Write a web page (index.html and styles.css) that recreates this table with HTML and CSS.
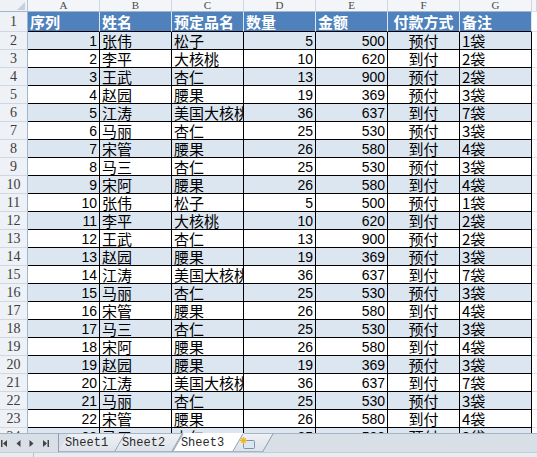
FILE: index.html
```html
<!DOCTYPE html>
<html lang="zh">
<head>
<meta charset="utf-8">
<title>Sheet3</title>
<link rel="stylesheet" href="styles.css">
</head>
<body>
<div class="sheet">
  <div class="row colhead">
    <div class="corner"><span class="tri"></span></div>
    <div class="ch">A</div><div class="ch">B</div><div class="ch">C</div><div class="ch">D</div><div class="ch">E</div><div class="ch">F</div><div class="ch">G</div><div class="ch x"></div>
  </div>
  <div class="row hdr">
    <div class="rh">1</div>
    <div class="c">序列</div><div class="c">姓名</div><div class="c">预定品名</div><div class="c">数量</div><div class="c">金额</div><div class="c m">付款方式</div><div class="c">备注</div><div class="x"></div>
  </div>
  <div class="row band"><div class="rh">2</div><div class="c r n">1</div><div class="c">张伟</div><div class="c">松子</div><div class="c r n">5</div><div class="c r n">500</div><div class="c m">预付</div><div class="c">1袋</div><div class="x"></div></div>
  <div class="row"><div class="rh">3</div><div class="c r n">2</div><div class="c">李平</div><div class="c">大核桃</div><div class="c r n">10</div><div class="c r n">620</div><div class="c m">到付</div><div class="c">2袋</div><div class="x"></div></div>
  <div class="row band"><div class="rh">4</div><div class="c r n">3</div><div class="c">王武</div><div class="c">杏仁</div><div class="c r n">13</div><div class="c r n">900</div><div class="c m">预付</div><div class="c">2袋</div><div class="x"></div></div>
  <div class="row"><div class="rh">5</div><div class="c r n">4</div><div class="c">赵园</div><div class="c">腰果</div><div class="c r n">19</div><div class="c r n">369</div><div class="c m">预付</div><div class="c">3袋</div><div class="x"></div></div>
  <div class="row band"><div class="rh">6</div><div class="c r n">5</div><div class="c">江涛</div><div class="c clip">美国大核桃</div><div class="c r n">36</div><div class="c r n">637</div><div class="c m">到付</div><div class="c">7袋</div><div class="x"></div></div>
  <div class="row"><div class="rh">7</div><div class="c r n">6</div><div class="c">马丽</div><div class="c">杏仁</div><div class="c r n">25</div><div class="c r n">530</div><div class="c m">预付</div><div class="c">3袋</div><div class="x"></div></div>
  <div class="row band"><div class="rh">8</div><div class="c r n">7</div><div class="c">宋管</div><div class="c">腰果</div><div class="c r n">26</div><div class="c r n">580</div><div class="c m">到付</div><div class="c">4袋</div><div class="x"></div></div>
  <div class="row"><div class="rh">9</div><div class="c r n">8</div><div class="c">马三</div><div class="c">杏仁</div><div class="c r n">25</div><div class="c r n">530</div><div class="c m">预付</div><div class="c">3袋</div><div class="x"></div></div>
  <div class="row band"><div class="rh">10</div><div class="c r n">9</div><div class="c">宋阿</div><div class="c">腰果</div><div class="c r n">26</div><div class="c r n">580</div><div class="c m">到付</div><div class="c">4袋</div><div class="x"></div></div>
  <div class="row"><div class="rh">11</div><div class="c r n">10</div><div class="c">张伟</div><div class="c">松子</div><div class="c r n">5</div><div class="c r n">500</div><div class="c m">预付</div><div class="c">1袋</div><div class="x"></div></div>
  <div class="row band"><div class="rh">12</div><div class="c r n">11</div><div class="c">李平</div><div class="c">大核桃</div><div class="c r n">10</div><div class="c r n">620</div><div class="c m">到付</div><div class="c">2袋</div><div class="x"></div></div>
  <div class="row"><div class="rh">13</div><div class="c r n">12</div><div class="c">王武</div><div class="c">杏仁</div><div class="c r n">13</div><div class="c r n">900</div><div class="c m">预付</div><div class="c">2袋</div><div class="x"></div></div>
  <div class="row band"><div class="rh">14</div><div class="c r n">13</div><div class="c">赵园</div><div class="c">腰果</div><div class="c r n">19</div><div class="c r n">369</div><div class="c m">预付</div><div class="c">3袋</div><div class="x"></div></div>
  <div class="row"><div class="rh">15</div><div class="c r n">14</div><div class="c">江涛</div><div class="c clip">美国大核桃</div><div class="c r n">36</div><div class="c r n">637</div><div class="c m">到付</div><div class="c">7袋</div><div class="x"></div></div>
  <div class="row band"><div class="rh">16</div><div class="c r n">15</div><div class="c">马丽</div><div class="c">杏仁</div><div class="c r n">25</div><div class="c r n">530</div><div class="c m">预付</div><div class="c">3袋</div><div class="x"></div></div>
  <div class="row"><div class="rh">17</div><div class="c r n">16</div><div class="c">宋管</div><div class="c">腰果</div><div class="c r n">26</div><div class="c r n">580</div><div class="c m">到付</div><div class="c">4袋</div><div class="x"></div></div>
  <div class="row band"><div class="rh">18</div><div class="c r n">17</div><div class="c">马三</div><div class="c">杏仁</div><div class="c r n">25</div><div class="c r n">530</div><div class="c m">预付</div><div class="c">3袋</div><div class="x"></div></div>
  <div class="row"><div class="rh">19</div><div class="c r n">18</div><div class="c">宋阿</div><div class="c">腰果</div><div class="c r n">26</div><div class="c r n">580</div><div class="c m">到付</div><div class="c">4袋</div><div class="x"></div></div>
  <div class="row band"><div class="rh">20</div><div class="c r n">19</div><div class="c">赵园</div><div class="c">腰果</div><div class="c r n">19</div><div class="c r n">369</div><div class="c m">预付</div><div class="c">3袋</div><div class="x"></div></div>
  <div class="row"><div class="rh">21</div><div class="c r n">20</div><div class="c">江涛</div><div class="c clip">美国大核桃</div><div class="c r n">36</div><div class="c r n">637</div><div class="c m">到付</div><div class="c">7袋</div><div class="x"></div></div>
  <div class="row band"><div class="rh">22</div><div class="c r n">21</div><div class="c">马丽</div><div class="c">杏仁</div><div class="c r n">25</div><div class="c r n">530</div><div class="c m">预付</div><div class="c">3袋</div><div class="x"></div></div>
  <div class="row"><div class="rh">23</div><div class="c r n">22</div><div class="c">宋管</div><div class="c">腰果</div><div class="c r n">26</div><div class="c r n">580</div><div class="c m">到付</div><div class="c">4袋</div><div class="x"></div></div>
  <div class="row band partial"><div class="rh">24</div><div class="c r n">23</div><div class="c">马三</div><div class="c">杏仁</div><div class="c r n">25</div><div class="c r n">530</div><div class="c m">预付</div><div class="c">3袋</div><div class="x"></div></div>
</div>
<div class="tabbar">
  <div class="nav">
    <svg width="7" height="7" viewBox="0 0 7 7"><rect x="0" y="0" width="1.5" height="7" fill="#444"/><polygon points="6,0 6,7 2,3.5" fill="#444"/></svg>
    <svg width="5" height="7" viewBox="0 0 5 7"><polygon points="4.5,0 4.5,7 0.5,3.5" fill="#444"/></svg>
    <svg width="5" height="7" viewBox="0 0 5 7"><polygon points="0.5,0 0.5,7 4.5,3.5" fill="#444"/></svg>
    <svg width="7" height="7" viewBox="0 0 7 7"><polygon points="1,0 1,7 5,3.5" fill="#444"/><rect x="5.5" y="0" width="1.5" height="7" fill="#444"/></svg>
  </div>
  <div class="tabs">
    <div class="tab first"><span class="lbl">Sheet1</span></div>
    <div class="tab"><span class="lbl">Sheet2</span></div>
    <div class="tab active"><span class="lbl">Sheet3</span></div>
    <div class="tab newtab">
      <svg width="18" height="12" viewBox="0 0 18 12"><rect x="4.5" y="3.5" width="11" height="8" rx="1" fill="#dbe6f3" stroke="#7d93ad"/><circle cx="4.5" cy="3.5" r="3" fill="#f6d25a"/><path d="M4.5 0v7M1 3.5h7M2 1l5 5M7 1l-5 5" stroke="#e8b020" stroke-width="0.8"/></svg>
    </div>
  </div>
</div>
<div class="status"><span class="grip"></span></div>
</body>
</html>
```

FILE: styles.css
```css
html, body {
  margin: 0;
  padding: 0;
  width: 537px;
  height: 457px;
  overflow: hidden;
  background: #fff;
}

.sheet {
  height: 433px;
  overflow: hidden;
  font-family: "Noto Sans CJK SC", sans-serif;
  font-size: 15px;
  color: #000;
}

.row {
  display: flex;
  height: 18px;
}

.row > div {
  box-sizing: border-box;
  flex: none;
}

.colhead {
  height: 12px;
}

.corner {
  width: 28px;
  background: #eef1f6;
  border-right: 1px solid #b8c4d3;
  border-bottom: 1px solid #9eb6ce;
  position: relative;
}

.corner .tri {
  position: absolute;
  right: 2px;
  bottom: 1px;
  width: 0;
  height: 0;
  border-left: 8px solid transparent;
  border-bottom: 8px solid #c8cfd9;
}

.ch {
  width: 72px;
  background: #f3f5f9;
  border-right: 1px solid #d0d7e2;
  border-bottom: 1px solid #9eb6ce;
  font-family: "Liberation Serif", serif;
  font-size: 11px;
  line-height: 11px;
  color: #4a4a4a;
  text-align: center;
}

.row > .ch.x,
.row > .x {
  flex: 1;
  width: auto;
}

.rh {
  width: 28px;
  background: #eef1f6;
  border-right: 1px solid #9eb6ce;
  border-bottom: 1px solid #d0d7e2;
  font-family: "Liberation Serif", serif;
  font-size: 14px;
  line-height: 18px;
  color: #3c3c3c;
  text-align: center;
}

.c {
  width: 72px;
  border-right: 1px solid #000;
  border-bottom: 1px solid #000;
  padding: 0 2px;
  line-height: 17px;
  white-space: nowrap;
}

.c.clip {
  overflow: hidden;
}

.x {
  border-bottom: 1px solid #dde2ea;
}

.c.r { text-align: right; }
.c.m { text-align: center; }

.c.n {
  font-family: "Liberation Sans", sans-serif;
  font-size: 14px;
  line-height: 18px;
}

.hdr {
  height: 20px;
}

.hdr .rh {
  line-height: 20px;
}

.hdr .c {
  background: #4f81bd;
  color: #fff;
  font-weight: bold;
  line-height: 19px;
  border-right-color: #dce6f1;
  border-bottom-color: #000;
}

.band .c {
  background: #dce6f1;
}

.tabbar {
  height: 19px;
  background: #d9dfe7;
  border-top: 1px solid #a7b4c6;
  box-sizing: border-box;
  display: flex;
  align-items: stretch;
}

.nav {
  width: 58px;
  display: flex;
  align-items: center;
  justify-content: space-between;
  padding: 0 9px 0 1px;
  box-sizing: border-box;
}

.tabs {
  display: flex;
  align-items: stretch;
  margin-top: -1px;
}

.tab {
  position: relative;
  z-index: 0;
  width: 57px;
  font-family: "Liberation Mono", monospace;
  font-size: 12px;
  line-height: 18px;
  color: #2a2a2a;
  text-align: center;
  padding-top: 1px;
  box-sizing: border-box;
}

.tab .lbl {
  position: relative;
  left: 0;
}

.tab::before {
  content: "";
  position: absolute;
  z-index: -1;
  top: 0;
  bottom: 0;
  left: 0;
  right: 0;
  background: linear-gradient(#eef1f5, #dde3ea);
  border-top: 1px solid #a7b4c6;
  border-right: 1px solid #8e9cb0;
  border-bottom: 1px solid #a7b4c6;
  transform: skewX(-30deg);
  transform-origin: bottom left;
}

.tab.first::after {
  content: "";
  position: absolute;
  left: 0;
  top: 0;
  bottom: 0;
  border-left: 1px solid #8e9cb0;
}

.tab.active {
  width: 61px;
  z-index: 1;
}

.tab.active::before {
  background: #fff;
  border-top-color: #fff;
  border-left: 1px solid #8e9cb0;
}

.tab.newtab {
  width: 30px;
  display: flex;
  align-items: center;
  justify-content: center;
  padding-top: 0;
}

.status {
  height: 5px;
  background: #e8ebf0;
  border-top: 1px solid #c3ccd8;
  box-sizing: border-box;
  position: relative;
}

.grip {
  position: absolute;
  left: 33px;
  top: 0;
  bottom: 0;
  border-left: 1px solid #b9c3d0;
}
```
